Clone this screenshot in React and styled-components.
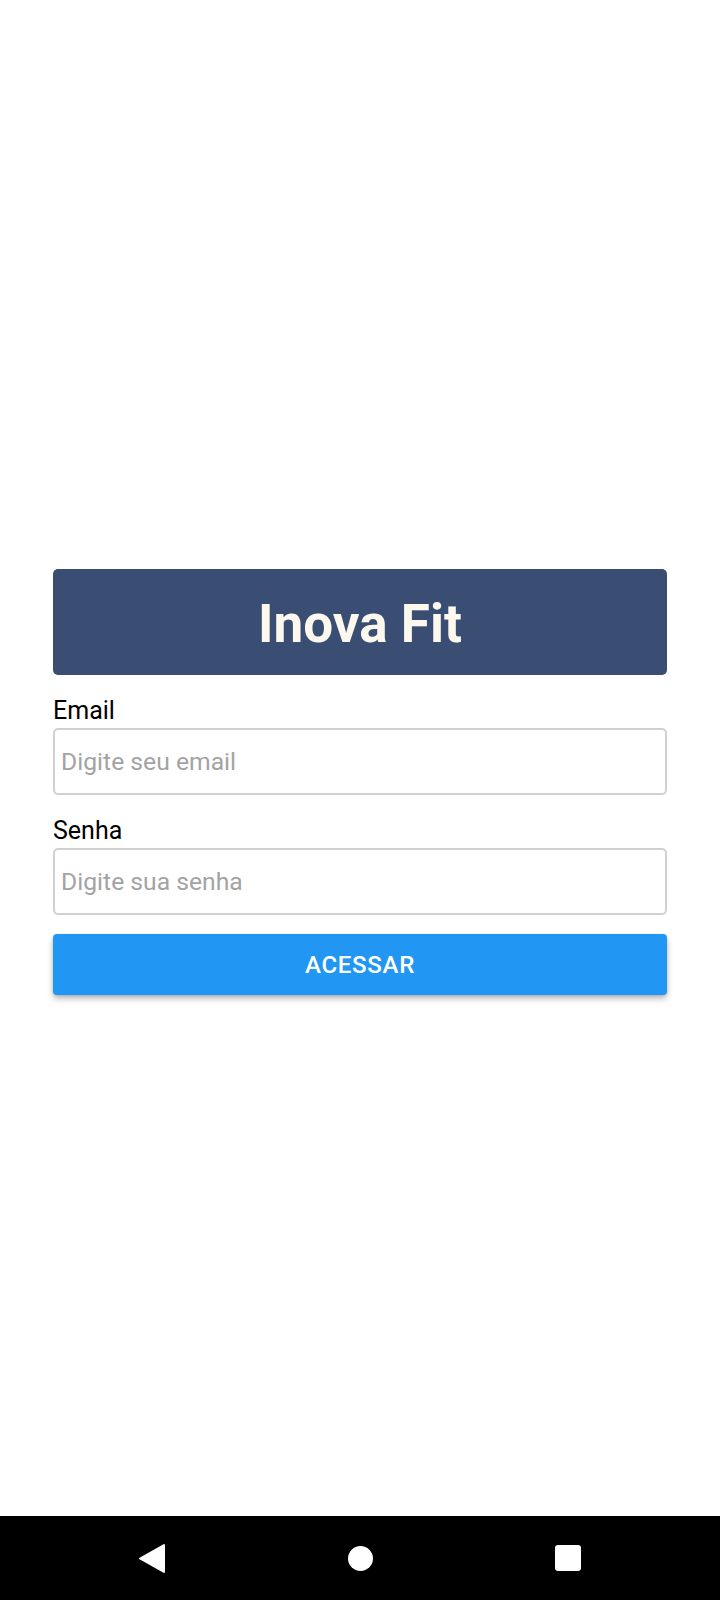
import React from "react";
import styled, { createGlobalStyle } from "styled-components";

const GlobalStyle = createGlobalStyle`
  html, body { margin: 0; padding: 0; background: #ffffff; }
  body { font-family: Roboto, "Noto Sans", "Liberation Sans", sans-serif; }
  * { box-sizing: border-box; }
`;

const Screen = styled.div`
  width: 720px;
  height: 1600px;
  display: flex;
  flex-direction: column;
  background: #ffffff;
`;

const StatusArea = styled.div`
  height: 48px;
  flex: none;
`;

const Main = styled.main`
  flex: 1;
  display: flex;
  flex-direction: column;
  justify-content: center;
  padding: 0 53px;
`;

const HeaderCard = styled.div`
  height: 106px;
  background: #3a4d72;
  border-radius: 5px;
  display: flex;
  align-items: center;
  justify-content: center;
  margin-bottom: 22px;
`;

const Title = styled.h1`
  margin: 0;
  padding-top: 4px;
  font-family: Roboto, "Noto Sans", sans-serif;
  font-weight: 700;
  font-size: 53px;
  line-height: 1;
  color: #fcf8ed;
`;

const Field = styled.div`
  display: flex;
  flex-direction: column;
  margin-bottom: ${(p) => p.$gap}px;
`;

const Label = styled.label`
  font-family: Roboto, "Noto Sans", sans-serif;
  font-size: 25px;
  line-height: 28px;
  color: #000000;
  margin-bottom: 3px;
`;

const Input = styled.input`
  height: 67px;
  width: 100%;
  border: 2px solid #d0d0d0;
  border-radius: 5px;
  padding: 0 6px;
  font-family: Roboto, "Noto Sans", sans-serif;
  font-size: 24.7px;
  color: #222;
  background: #ffffff;
  outline: none;
  &::placeholder { color: #a3a3a3; }
`;

const Button = styled.button`
  height: 61px;
  width: 100%;
  border: none;
  border-radius: 4px;
  background: #2196f3;
  color: #ffffff;
  font-family: Roboto, "Noto Sans", sans-serif;
  font-weight: 500;
  font-size: 24px;
  letter-spacing: 0.7px;
  box-shadow: 0 4px 6px rgba(0, 0, 0, 0.24), 0 1px 3px rgba(0, 0, 0, 0.14);
  cursor: pointer;
`;

const NavBar = styled.nav`
  height: 84px;
  flex: none;
  background: #000000;
  display: grid;
  grid-template-columns: repeat(3, 208px);
  justify-content: center;
  align-items: center;
`;

const NavSlot = styled.div`
  display: flex;
  align-items: center;
  justify-content: center;
`;

const HomeDot = styled.div`
  width: 25px;
  height: 25px;
  border-radius: 50%;
  background: #ffffff;
`;

const RecentsSquare = styled.div`
  width: 26px;
  height: 26px;
  border-radius: 3px;
  background: #ffffff;
`;

export default function App() {
  return (
    <>
      <GlobalStyle />
      <Screen>
        <StatusArea />
        <Main>
          <HeaderCard>
            <Title>Inova Fit</Title>
          </HeaderCard>
          <Field $gap={22}>
            <Label>Email</Label>
            <Input type="email" placeholder="Digite seu email" />
          </Field>
          <Field $gap={19}>
            <Label>Senha</Label>
            <Input type="password" placeholder="Digite sua senha" />
          </Field>
          <Button>ACESSAR</Button>
        </Main>
        <NavBar>
          <NavSlot>
            <svg width="28" height="31" viewBox="0 0 28 31">
              <path
                d="M2 15.5 L26 2 L26 29 Z"
                fill="#ffffff"
                stroke="#ffffff"
                strokeWidth="2"
                strokeLinejoin="round"
              />
            </svg>
          </NavSlot>
          <NavSlot>
            <HomeDot />
          </NavSlot>
          <NavSlot>
            <RecentsSquare />
          </NavSlot>
        </NavBar>
      </Screen>
    </>
  );
}
